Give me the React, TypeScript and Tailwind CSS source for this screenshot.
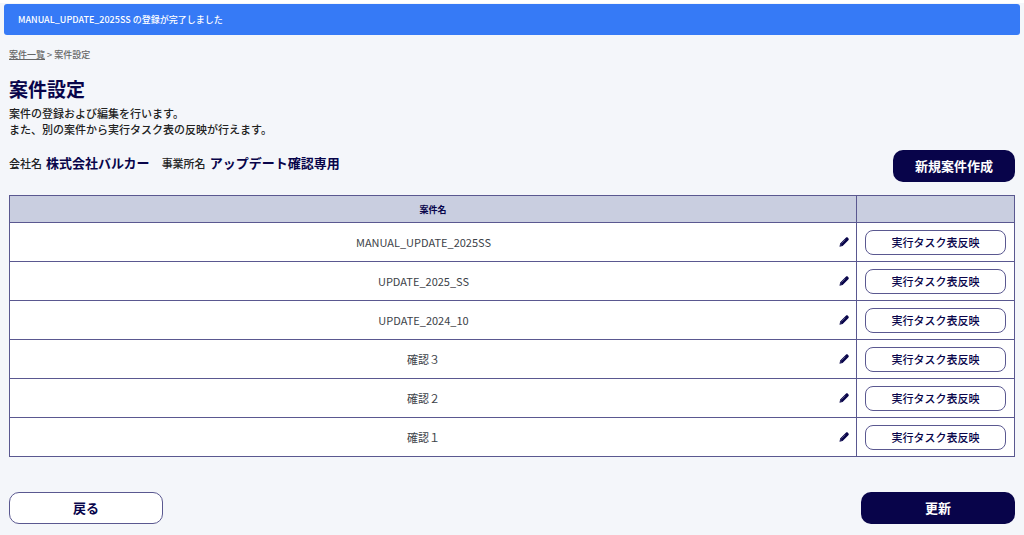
const projects = [
    "MANUAL_UPDATE_2025SS",
    "UPDATE_2025_SS",
    "UPDATE_2024_10",
    "確認３",
    "確認２",
    "確認１",
]

function PencilIcon() {
    return (
        <svg viewBox="0 0 20 20" className="size-[10px]" aria-hidden="true">
            <path fill="currentColor" d="M1 19.500l1.200-6.500L13.200 2l1-.8c.9-.9 2.200-.9 3.100 0l1.700 1.700c.9.9.9 2.200 0 3.100l-.8 1L7.200 18z" />
            <path stroke="#fff" strokeWidth="1" strokeLinecap="round" opacity=".6" d="M5.500 12.500l6.500-6.500" />
            <path fill="#fff" opacity=".6" d="M3.300 14.600l2.100 2.100-2 .5-.6-.6z" />
        </svg>
    )
}

export default function App() {
    return (
        <div className="min-h-screen bg-[#f4f6fa] border-t-3 border-white font-['Noto_Sans_CJK_JP',sans-serif] font-medium text-[#222] pb-[11px]">
            <div role="status" className="mx-1 mt-px h-[31px] flex items-center rounded-[3px] bg-[#367af6] px-[14px] text-[9px] text-white">
                MANUAL_UPDATE_2025SS の登録が完了しました
            </div>
            <main className="px-[9px]">
                <nav className="mt-3 text-[9px] leading-4 text-[#666]">
                    <a href="#list" className="underline">案件一覧</a> &gt; 案件設定
                </nav>
                <h1 className="mt-3 text-[19px] leading-7 font-bold text-[#08044a]">案件設定</h1>
                <p className="mt-[2px] text-[11px] leading-4">
                    案件の登録および編集を行います。<br />
                    また、別の案件から実行タスク表の反映が行えます。
                </p>
                <div className="mt-[13px] flex items-start justify-between">
                    <dl className="flex items-baseline pt-[3px] text-[11px] leading-5">
                        <dt>会社名</dt>
                        <dd className="ml-1 mr-3 text-[13px] font-bold text-[#08044a]">株式会社バルカー</dd>
                        <dt>事業所名</dt>
                        <dd className="ml-1 text-[13px] font-bold text-[#08044a]">アップデート確認専用</dd>
                    </dl>
                    <button type="button" className="h-8 w-[122px] rounded-[10px] bg-[#08044a] text-[13px] font-bold text-white">新規案件作成</button>
                </div>
                <table className="mt-[13px] w-full table-fixed border-collapse bg-white text-[11px]">
                    <thead>
                        <tr className="h-[27px] bg-[#c9cee0] text-[9px] text-[#08044a]">
                            <th className="border border-[#5a5890] pt-0.5">案件名</th>
                            <th aria-label="操作" className="w-[158px] border border-[#5a5890]"></th>
                        </tr>
                    </thead>
                    <tbody>
                        {projects.map((name) => (
                            <tr key={name} className="h-[39px]">
                                <td className="border border-[#5a5890] pl-2 pr-[7px]">
                                    <div className="flex items-center font-normal text-[#3c4248]">
                                        <span className="flex-1 text-center">{name}</span>
                                        <button type="button" aria-label="編集" className="flex w-5 justify-end text-[#08044a]"><PencilIcon /></button>
                                    </div>
                                </td>
                                <td className="border border-[#5a5890] px-2">
                                    <button type="button" className="block h-[25px] w-full rounded-[8px] border border-[#5a5890] text-[#08044a]">実行タスク表反映</button>
                                </td>
                            </tr>
                        ))}
                    </tbody>
                </table>
                <div className="mt-[35px] flex justify-between text-[13px] font-bold">
                    <button type="button" className="h-8 w-[154px] rounded-[10px] border border-[#5a5890] bg-white text-[#08044a]">戻る</button>
                    <button type="button" className="h-8 w-[154px] rounded-[10px] bg-[#08044a] text-white">更新</button>
                </div>
            </main>
        </div>
    )
}
